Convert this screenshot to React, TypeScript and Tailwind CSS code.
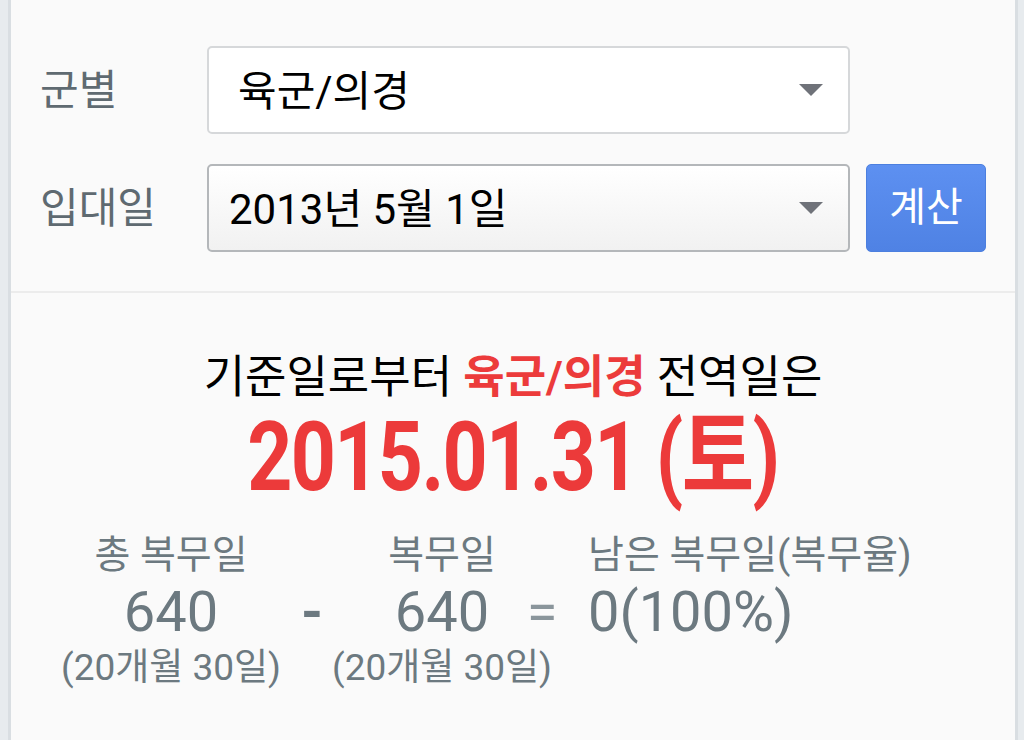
const FONT = "font-['Roboto','Noto_Sans_CJK_KR',sans-serif]";

function Caret() {
  return (
    <svg width="26" height="14" viewBox="0 0 26 14" className="shrink-0">
      <path d="M1 1h24L13 13z" fill="#6f7279" />
    </svg>
  );
}

function SelectBox({ value, shaded }: { value: string; shaded?: boolean }) {
  return (
    <div
      className={`flex h-[88px] w-[643px] items-center justify-between rounded-[5px] border-2 pr-[24px] ${
        shaded
          ? "border-[#b4b7ba] bg-gradient-to-b from-white to-[#f1f1f1] pl-[20px]"
          : "border-[#d6d8da] bg-white pl-[29px]"
      }`}
    >
      <span className="pt-[4px] text-[42px] leading-none text-black">{value}</span>
      <Caret />
    </div>
  );
}

function Stat({ title, value, sub }: { title: string; value: string; sub: string }) {
  return (
    <div className="flex flex-col items-center whitespace-nowrap">
      <div className="text-[39px] leading-[46px]">{title}</div>
      <div className="mt-[4px] text-[56px] leading-[60px]">{value}</div>
      <div className="mt-[4px] text-[37px] leading-[44px]">{sub}</div>
    </div>
  );
}

export default function App() {
  return (
    <div className={`flex h-[740px] w-full bg-[#e7ebee] pl-[8px] pr-[6px] ${FONT}`}>
      <div className="flex flex-1 flex-col border-x-[3px] border-[#d9dee2] bg-[#fafafa]">
        <div className="flex flex-col gap-[30px] pb-[39px] pl-[29px] pt-[46px]">
          <div className="flex items-center">
            <div className="w-[167px] text-[42px] text-[#5f6a71]">군별</div>
            <SelectBox value="육군/의경" />
          </div>
          <div className="flex items-center">
            <div className="w-[167px] text-[42px] text-[#5f6a71]">입대일</div>
            <SelectBox value="2013년 5월 1일" shaded />
            <button className="ml-[16px] h-[88px] w-[120px] rounded-[5px] border border-[#4c7fdf] bg-gradient-to-b from-[#5d90f1] to-[#4f82e4] text-[40px] text-white">
              계산
            </button>
          </div>
        </div>
        <div className="h-[2px] bg-[#ececec]" />
        <div className="flex flex-col items-center pt-[57px]">
          <div className="text-[45px] leading-[56px] text-black">
            기준일로부터 <span className="font-bold text-[#ec3b3b]">육군/의경</span> 전역일은
          </div>
          <div className="mt-[1px] whitespace-nowrap text-[96px] font-bold leading-[100px] tracking-[-2px] text-[#ec3a3a]">
            <span className="inline-block scale-x-[0.82]">2015.01.31 (토)</span>
          </div>
        </div>
        <div className="mt-[25px] flex items-start pl-[60px] text-[#6c7980]">
          <div className="w-[200px]">
            <Stat title="총 복무일" value="640" sub="(20개월 30일)" />
          </div>
          <div className="mt-[50px] w-[82px] text-center text-[56px] font-bold leading-[60px]">-</div>
          <div className="w-[178px]">
            <Stat title="복무일" value="640" sub="(20개월 30일)" />
          </div>
          <div className="mt-[50px] flex w-[22px] justify-center text-[56px] leading-[60px] text-[#8a959b]">=</div>
          <div className="ml-[35px] flex flex-col items-start whitespace-nowrap">
            <div className="text-[39px] leading-[46px]">남은 복무일(복무율)</div>
            <div className="mt-[4px] text-[56px] leading-[60px]">0(100%)</div>
          </div>
        </div>
      </div>
    </div>
  );
}
